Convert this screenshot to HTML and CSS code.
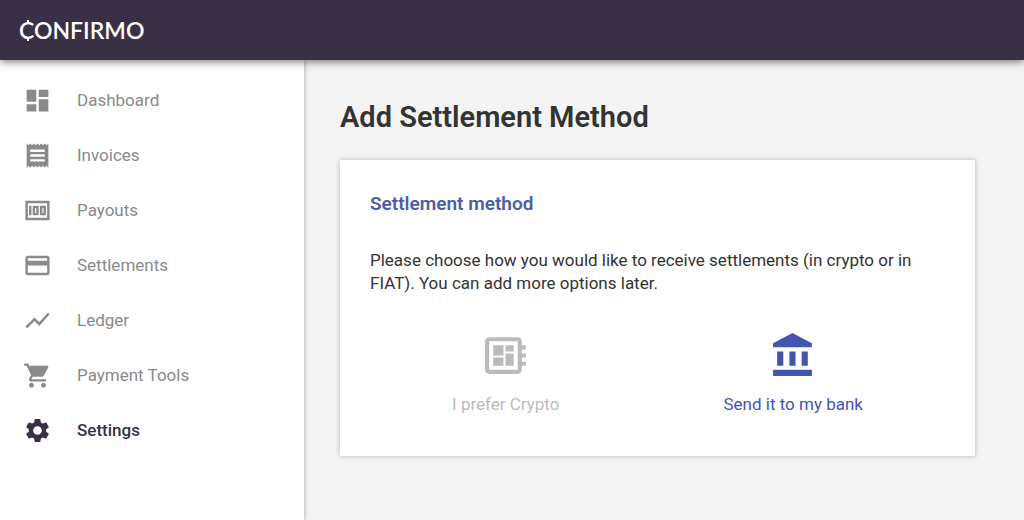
FILE: index.html
```
<!DOCTYPE html>
<html lang="en">
<head>
    <meta charset="UTF-8">
    <meta name="viewport" content="width=device-width, initial-scale=1.0">
    <title>Add Settlement Method - Confirmo</title>
    <link rel="stylesheet" href="styles.css">
</head>
<body>
    <header class="header">
        <a class="logo" href="#">CONFIRMO</a>
    </header>

    <div class="layout">
        <!-- Side menu -->
        <nav class="sidebar">
            <a class="menu-item" href="#">
                <svg class="menu-icon" viewBox="0 0 24 24"><path d="M3 13h8V3H3v10zm0 8h8v-6H3v6zm10 0h8V11h-8v10zm0-18v6h8V3h-8z"/></svg>
                <span>Dashboard</span>
            </a>
            <a class="menu-item" href="#">
                <svg class="menu-icon" viewBox="0 0 24 24"><path d="M18 17H6v-2h12v2zm0-4H6v-2h12v2zm0-4H6V7h12v2zM3 22l1.5-1.5L6 22l1.5-1.5L9 22l1.5-1.5L12 22l1.5-1.5L15 22l1.5-1.5L18 22l1.5-1.5L21 22V2l-1.5 1.5L18 2l-1.5 1.5L15 2l-1.5 1.5L12 2l-1.5 1.5L9 2 7.5 3.5 6 2 4.5 3.5 3 2v20z"/></svg>
                <span>Invoices</span>
            </a>
            <a class="menu-item" href="#">
                <svg class="menu-icon" viewBox="0 0 24 24"><path d="M15 16h3c.55 0 1-.45 1-1V9c0-.55-.45-1-1-1h-3c-.55 0-1 .45-1 1v6c0 .55.45 1 1 1zm1-6h1v4h-1v-4zm-7 6h3c.55 0 1-.45 1-1V9c0-.55-.45-1-1-1H9c-.55 0-1 .45-1 1v6c0 .55.45 1 1 1zm1-6h1v4h-1v-4zM5 8h2v8H5zM2 4v16h20V4H2zm2 14V6h16v12H4z"/></svg>
                <span>Payouts</span>
            </a>
            <a class="menu-item" href="#">
                <svg class="menu-icon" viewBox="0 0 24 24"><path d="M20 4H4c-1.11 0-1.99.89-1.99 2L2 18c0 1.11.89 2 2 2h16c1.11 0 2-.89 2-2V6c0-1.11-.89-2-2-2zm0 14H4v-6h16v6zm0-10H4V6h16v2z"/></svg>
                <span>Settlements</span>
            </a>
            <a class="menu-item" href="#">
                <svg class="menu-icon" viewBox="0 0 24 24"><path d="M3.5 18.49l6-6.01 4 4L22 6.92l-1.41-1.41-7.09 7.97-4-4L2 16.99z"/></svg>
                <span>Ledger</span>
            </a>
            <a class="menu-item" href="#">
                <svg class="menu-icon" viewBox="0 0 24 24"><path d="M7 18c-1.1 0-1.99.9-1.99 2S5.9 22 7 22s2-.9 2-2-.9-2-2-2zM1 2v2h2l3.6 7.59-1.35 2.45c-.16.28-.25.61-.25.96 0 1.1.9 2 2 2h12v-2H7.42c-.14 0-.25-.11-.25-.25l.03-.12.9-1.63h7.45c.75 0 1.41-.41 1.75-1.03l3.58-6.49c.08-.14.12-.31.12-.48 0-.55-.45-1-1-1H5.21l-.94-2H1zm16 16c-1.1 0-1.99.9-1.99 2s.89 2 1.99 2 2-.9 2-2-.9-2-2-2z"/></svg>
                <span>Payment Tools</span>
            </a>
            <a class="menu-item active" href="#">
                <svg class="menu-icon" viewBox="0 0 24 24"><path d="M19.14 12.94c.04-.3.06-.61.06-.94 0-.32-.02-.64-.07-.94l2.03-1.58c.18-.14.23-.41.12-.61l-1.92-3.32c-.12-.22-.37-.29-.59-.22l-2.39.96c-.5-.38-1.03-.7-1.62-.94l-.36-2.54c-.04-.24-.24-.41-.48-.41h-3.84c-.24 0-.43.17-.47.41l-.36 2.54c-.59.24-1.13.57-1.62.94l-2.39-.96c-.22-.08-.47 0-.59.22L2.74 8.87c-.12.21-.08.47.12.61l2.03 1.58c-.05.3-.09.63-.09.94s.02.64.07.94l-2.03 1.58c-.18.14-.23.41-.12.61l1.92 3.32c.12.22.37.29.59.22l2.39-.96c.5.38 1.03.7 1.62.94l.36 2.54c.05.24.24.41.48.41h3.84c.24 0 .44-.17.47-.41l.36-2.54c.59-.24 1.13-.56 1.62-.94l2.39.96c.22.08.47 0 .59-.22l1.92-3.32c.12-.22.07-.47-.12-.61l-2.01-1.58zM12 15.6c-1.98 0-3.6-1.62-3.6-3.6s1.62-3.6 3.6-3.6 3.6 1.62 3.6 3.6-1.62 3.6-3.6 3.6z"/></svg>
                <span>Settings</span>
            </a>
        </nav>

        <main class="content">
            <h1>Add Settlement Method</h1>

            <section class="card">
                <h2>Settlement method</h2>
                <p>Please choose how you would like to receive settlements (in crypto or in FIAT). You can add more options later.</p>

                <div class="options">
                    <button class="option" type="button">
                        <svg class="option-icon" viewBox="0 0 24 24"><path d="M22 9V7h-2V5c0-1.1-.9-2-2-2H4c-1.1 0-2 .9-2 2v14c0 1.1.9 2 2 2h14c1.1 0 2-.9 2-2v-2h2v-2h-2v-2h2v-2h-2V9h2zm-4 10H4V5h14v14zM6 13h5v4H6zm6-6h4v3h-4zM6 7h5v5H6zm6 4h4v6h-4z"/></svg>
                        <span>I prefer Crypto</span>
                    </button>
                    <button class="option selected" type="button">
                        <svg class="option-icon" viewBox="0 0 24 24"><path d="M4 10v7h3v-7H4zm6 0v7h3v-7h-3zM2 22h19v-3H2v3zm14-12v7h3v-7h-3zm-4.500-9L2 6v2h19V6l-9.500-5z"/></svg>
                        <span>Send it to my bank</span>
                    </button>
                </div>
            </section>
        </main>
    </div>
</body>
</html>
```
FILE: styles.css
```
* {
    box-sizing: border-box;
}

body {
    display: flex;
    flex-direction: column;
    min-height: 100vh;
    margin: 0;
    font-family: Roboto, "Liberation Sans", sans-serif;
    font-size: 17px;
    line-height: 23px;
    color: #333333;
    background-color: #f4f4f4;
}

svg {
    display: block;
    flex: none;
    fill: currentColor;
}

.header {
    position: relative;
    z-index: 2;
    display: flex;
    align-items: center;
    height: 60px;
    padding: 0 19px;
    background-color: #3a3045;
    box-shadow: 0 2px 8px rgba(0, 0, 0, 0.5);
}

.logo {
    position: relative;
    font-family: Lato, sans-serif;
    font-size: 23px;
    font-weight: 600;
    color: #ffffff;
    text-decoration: none;
}

/* ticks above and below the C */
.logo::before,
.logo::after {
    content: "";
    position: absolute;
    left: 8px;
    width: 2px;
    height: 3px;
    background-color: #ffffff;
}

.logo::before {
    top: 1px;
}

.logo::after {
    bottom: 1px;
}

.layout {
    display: flex;
    flex: 1;
}

.sidebar {
    flex: none;
    width: 304px;
    padding-top: 13px;
    background-color: #ffffff;
    box-shadow: 0 0 5px rgba(0, 0, 0, 0.35);
}

.menu-item {
    display: flex;
    align-items: center;
    gap: 25px;
    height: 55px;
    padding-left: 23px;
    color: #8a8a8a;
    text-decoration: none;
}

.menu-item.active {
    font-weight: 500;
    color: #3a3045;
}

.menu-icon {
    width: 29px;
    height: 29px;
}

.content {
    flex: 1;
    padding: 39px 49px 39px 36px;
}

h1 {
    margin: 0 0 25px;
    font-size: 29px;
    font-weight: 600;
    line-height: 36px;
}

.card {
    padding: 32px 30px 40px;
    background-color: #ffffff;
    box-shadow: 0 0 5px rgba(0, 0, 0, 0.25);
}

h2 {
    margin: 0 0 34px;
    font-size: 19px;
    font-weight: 600;
    line-height: 23px;
    color: #4d5ea8;
}

p {
    margin: 0;
}

.options {
    display: grid;
    grid-template-columns: 1fr 1fr;
    margin: 36px 8px 0 -8px;
}

.option {
    display: flex;
    flex-direction: column;
    align-items: center;
    gap: 13px;
    padding: 0;
    font: inherit;
    color: #bbbbbb;
    background: none;
    border: none;
    cursor: pointer;
}

.option.selected {
    color: #4455b0;
}

.option-icon {
    width: 49px;
    height: 49px;
}
```
